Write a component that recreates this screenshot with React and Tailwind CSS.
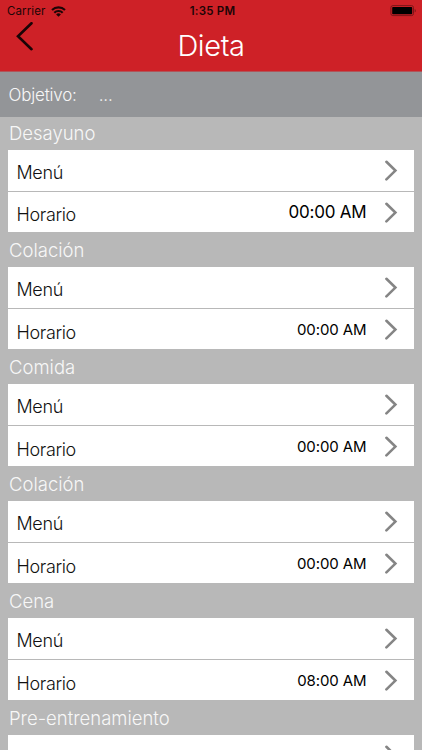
import React from 'react';

const meals = [
  { name: 'Desayuno', time: '00:00 AM', large: true },
  { name: 'Colación', time: '00:00 AM' },
  { name: 'Comida', time: '00:00 AM' },
  { name: 'Colación', time: '00:00 AM' },
  { name: 'Cena', time: '08:00 AM' },
  { name: 'Pre-entrenamiento', collapsed: true },
];

const Chevron = () => (
  <svg width="14" height="22" viewBox="0 0 14 22" fill="none" stroke="#858585" strokeWidth="2.6" strokeLinecap="round">
    <path d="M2.4 1.8 11.4 10.6 2.4 19.4" strokeLinejoin="miter" />
  </svg>
);

const StatusBar = () => (
  <div className="grid h-[22px] grid-cols-3 items-center pl-[7px] pr-[5px] text-[#1c0506]">
    <div className="flex items-center gap-[6px]">
      <span className="pt-px text-[11.5px] tracking-[0.1px]">Carrier</span>
      <svg width="15" height="11" viewBox="0 0 15 11" fill="none" stroke="currentColor" strokeWidth="2.1">
        <path d="M1 4.1a9.2 9.2 0 0 1 13 0" />
        <path d="M3.3 6.7a5.9 5.9 0 0 1 8.4 0" />
        <path d="M7.5 10.8 5.1 8.5a3.4 3.4 0 0 1 4.8 0Z" fill="currentColor" stroke="none" />
      </svg>
    </div>
    <span className="pl-px pt-px text-center text-[11.5px] font-semibold tracking-[0.2px]">1:35 PM</span>
    <svg className="justify-self-end" width="27" height="12" viewBox="0 0 27 12">
      <rect x="0.9" y="0.6" width="22.6" height="10" rx="2" fill="none" stroke="#7c1519" />
      <rect x="2.2" y="1.9" width="20" height="7.4" rx="0.8" fill="#000" />
      <path d="M24.7 4c1.5.6 1.5 2.8 0 3.4Z" fill="#7c1519" />
    </svg>
  </div>
);

const Row = ({ label, low, children }) => (
  <div className="flex h-[41px] items-center justify-between pl-[8.5px] pr-4">
    <span className={`${low ? 'pt-[6px]' : 'pt-[4px]'} text-[18px] font-light tracking-[-0.35px] text-[#111]`}>{label}</span>
    <div className="flex items-center gap-[17.5px]">
      {children}
      <Chevron />
    </div>
  </div>
);

const Meal = ({ name, time, large, collapsed }) => (
  <section className="h-[117px] px-2">
    <h2 className="h-[33px] pl-px text-[18.5px] font-light leading-[32px] text-[#f7f7f7]">{name}</h2>
    <div className="h-[82.4px] bg-white">
      <Row label={collapsed ? '' : 'Menú'} />
      {!collapsed && (
        <>
          <div className="h-px bg-[#b8b8b8]" />
          <Row label="Horario" low={!large}>
            <span className={large ? 'text-[17px] tracking-[-0.2px] text-black' : 'pt-px text-[15px] tracking-[-0.1px] text-black'}>
              {time}
            </span>
          </Row>
        </>
      )}
    </div>
  </section>
);

export default function App() {
  return (
    <div className="flex h-[750px] w-full flex-col overflow-hidden bg-[#b8b8b8] font-['Inter','Liberation_Sans',sans-serif]">
      <header className="h-[72px] shrink-0 border-b border-[#b0555a] bg-[#ce2127]">
        <StatusBar />
        <div className="grid grid-cols-[60px_1fr_60px]">
          <button aria-label="Atrás" className="flex items-start pl-[16px]">
            <svg width="18" height="30" viewBox="0 0 18 30" fill="none" stroke="#190406" strokeWidth="2.6" strokeLinecap="round">
              <path d="M15.5 1.2 2 14.2 15.5 27.2" />
            </svg>
          </button>
          <h1 className="text-center text-[29px] font-light leading-[47px] tracking-[-0.4px] text-white">Dieta</h1>
        </div>
      </header>
      <div className="flex h-[45px] shrink-0 items-center gap-[22px] bg-[#939598] pl-[8.5px] pt-[2px] text-[17px] font-light tracking-[-0.2px] text-[#f7f7f7]">
        <span>Objetivo:</span>
        <span>...</span>
      </div>
      <main>
        {meals.map((meal, i) => (
          <Meal key={i} {...meal} />
        ))}
      </main>
    </div>
  );
}
